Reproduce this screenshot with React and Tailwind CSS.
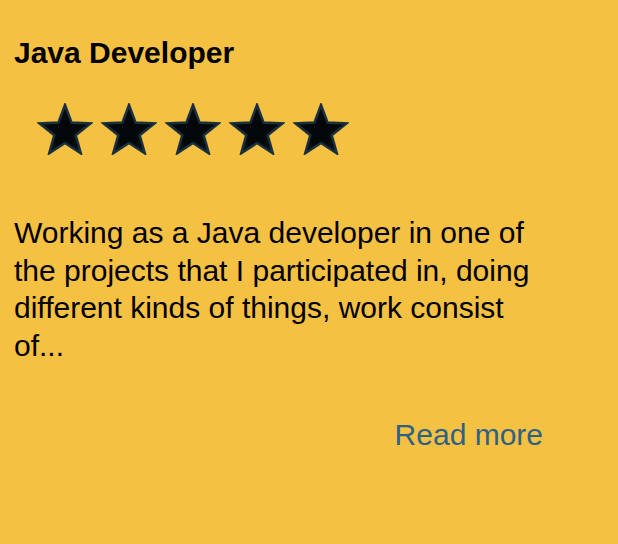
import React from "react";

function Star() {
    return (
        <svg width="56" height="52" viewBox="0 0 56 52" className="shrink-0">
            <polygon
                points="28,2 34.6,19.6 53.5,20.4 38.7,32.2 43.8,50.3 28,40 12.2,50.3 17.3,32.2 2.5,20.4 21.4,19.6"
                fill="#05080b"
                stroke="#17313f"
                strokeWidth="2.5"
                strokeLinejoin="miter"
            />
        </svg>
    );
}

export default function App() {
    return (
        <div className="w-[618px] h-[544px] bg-[#f5c142] overflow-hidden font-['Liberation_Sans',Arial,sans-serif]">
            <div className="pt-[37px] pl-[14px]">
                <h2 className="text-[30px] leading-[32px] font-bold text-black">Java Developer</h2>

                <div className="mt-[34px] ml-[23px] flex gap-[8px]">
                    <Star />
                    <Star />
                    <Star />
                    <Star />
                    <Star />
                </div>

                <p className="mt-[59px] text-[30px] leading-[37.5px] text-black w-[540px]">
                    Working as a Java developer in one of the projects that I participated in, doing different kinds of things, work consist of...
                </p>

                <div className="mt-[52px] flex justify-end w-[529px]">
                    <a href="#" className="text-[30px] leading-[37px] text-[#2d6185]">Read more</a>
                </div>
            </div>
        </div>
    );
}
